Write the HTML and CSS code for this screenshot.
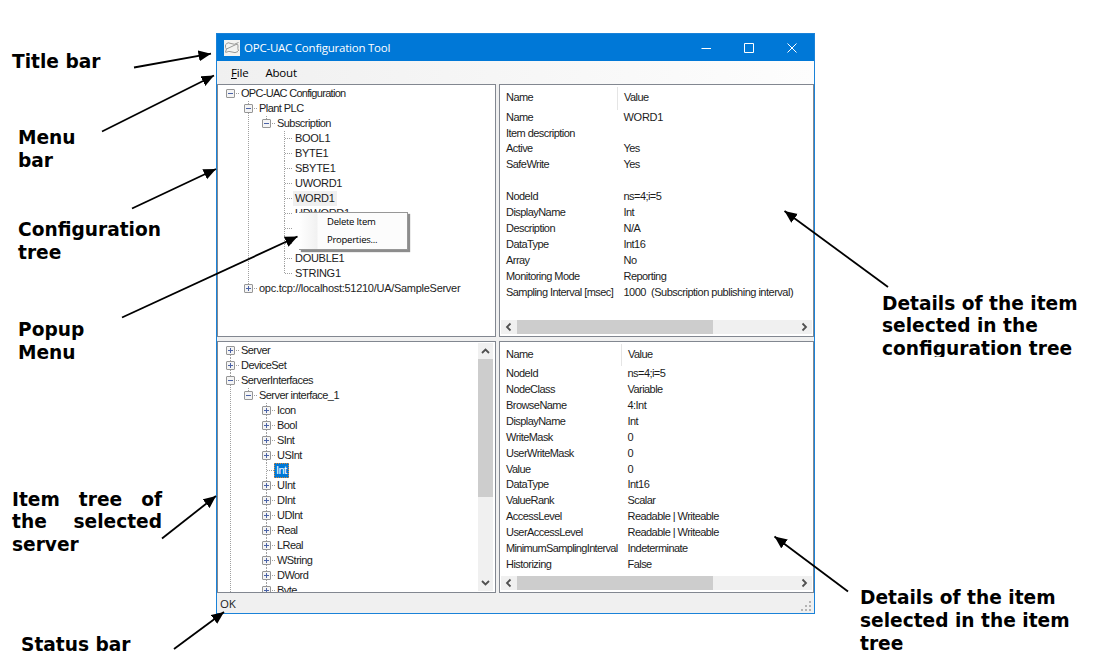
FILE: index.html
```html
<!DOCTYPE html>
<html lang="en">
<head>
    <meta charset="UTF-8">
    <title>OPC-UAC Configuration Tool</title>
    <link rel="stylesheet" href="styles.css">
</head>
<body>

<div class="page">
    <div class="notes">
        <p class="title-note">Title bar</p>
        <p class="menu-note">Menu<br>bar</p>
        <p class="config-note">Configuration<br>tree</p>
        <p class="popup-note">Popup<br>Menu</p>
        <p class="item-note">Item tree of the selected server</p>
        <p class="status-note">Status bar</p>
    </div>

    <div class="window">
        <div class="titlebar">
            <svg class="logo" width="16" height="16" viewBox="0 0 16 16">
                <rect width="16" height="16" fill="#f3f3f1"/>
                <path d="M1.500 4.500Q4 1.500 7 3.500T14.500 2.500M1.500 5Q1 8 2.500 9L12 4.500Q14.500 3.500 14 6T14.500 11M1.500 12.500Q5 10.500 8 12T14 11.500M2.500 9L1.500 12" fill="none" stroke="#9a9a98"/>
            </svg>
            <span class="caption">OPC-UAC Configuration Tool</span>
            <svg width="97" height="12" viewBox="0 0 97 12" fill="none" stroke="#fff">
                <path d="M.5 6.5H10M43.5 1.5H52.5V10.500H43.5ZM86.500 1.500L95.500 10.500M95.500 1.500L86.500 10.500"/>
            </svg>
        </div>
        <div class="menubar">
            <span><u>F</u>ile</span>
            <span>About</span>
        </div>

        <div class="panels">
            <div class="panel config-tree">
                <ul class="tree">
                    <li><div class="row"><i class="box minus"></i><span class="root">OPC-UAC Configuration</span></div>
                        <ul>
                            <li><div class="row"><i class="box minus"></i><span>Plant PLC</span></div>
                                <ul>
                                    <li><div class="row"><i class="box minus"></i><span>Subscription</span></div>
                                        <ul class="caps">
                                            <li><div class="row leaf"><span>BOOL1</span></div></li>
                                            <li><div class="row leaf"><span>BYTE1</span></div></li>
                                            <li><div class="row leaf"><span>SBYTE1</span></div></li>
                                            <li><div class="row leaf"><span>UWORD1</span></div></li>
                                            <li><div class="row leaf"><span class="current">WORD1</span></div></li>
                                            <li><div class="row leaf"><span>UDWORD1</span></div></li>
                                            <li><div class="row leaf"><span></span></div></li>
                                            <li><div class="row leaf"><span></span></div></li>
                                            <li><div class="row leaf"><span>DOUBLE1</span></div></li>
                                            <li><div class="row leaf"><span>STRING1</span></div></li>
                                        </ul>
                                    </li>
                                </ul>
                            </li>
                            <li><div class="row"><i class="box plus"></i><span class="caps">opc.tcp://localhost:51210/UA/SampleServer</span></div></li>
                        </ul>
                    </li>
                </ul>
                <div class="popup">
                    <div>Delete Item</div>
                    <div>Properties...</div>
                </div>
            </div>

            <div class="panel details">
                <table>
                    <tr><th>Name</th><th>Value</th></tr>
                    <tr><td>Name</td><td class="caps">WORD1</td></tr>
                    <tr><td>Item description</td><td></td></tr>
                    <tr><td>Active</td><td>Yes</td></tr>
                    <tr><td>SafeWrite</td><td>Yes</td></tr>
                    <tr><td></td><td></td></tr>
                    <tr><td>NodeId</td><td>ns=4;i=5</td></tr>
                    <tr><td>DisplayName</td><td>Int</td></tr>
                    <tr><td>Description</td><td>N/A</td></tr>
                    <tr><td>DataType</td><td>Int16</td></tr>
                    <tr><td>Array</td><td>No</td></tr>
                    <tr><td>Monitoring Mode</td><td>Reporting</td></tr>
                    <tr><td>Sampling Interval [msec]</td><td class="interval">1000&nbsp; (Subscription publishing interval)</td></tr>
                </table>
                <div class="hscroll">
                    <svg width="16" height="14" viewBox="0 0 16 14"><path d="M9.500 3.500L6 7L9.500 10.500"/></svg>
                    <div class="thumb"></div>
                    <svg width="16" height="14" viewBox="0 0 16 14"><path d="M6.500 3.500L10 7L6.500 10.500"/></svg>
                </div>
            </div>

            <div class="panel item-tree">
                <ul class="tree">
                    <li><div class="row"><i class="box plus"></i><span>Server</span></div></li>
                    <li><div class="row"><i class="box plus"></i><span>DeviceSet</span></div></li>
                    <li><div class="row"><i class="box minus"></i><span>ServerInterfaces</span></div>
                        <ul>
                            <li><div class="row"><i class="box minus"></i><span>Server interface_1</span></div>
                                <ul>
                                    <li><div class="row"><i class="box plus"></i><span>Icon</span></div></li>
                                    <li><div class="row"><i class="box plus"></i><span>Bool</span></div></li>
                                    <li><div class="row"><i class="box plus"></i><span>SInt</span></div></li>
                                    <li><div class="row"><i class="box plus"></i><span>USInt</span></div></li>
                                    <li><div class="row leaf"><span class="selected">Int</span></div></li>
                                    <li><div class="row"><i class="box plus"></i><span>UInt</span></div></li>
                                    <li><div class="row"><i class="box plus"></i><span>DInt</span></div></li>
                                    <li><div class="row"><i class="box plus"></i><span>UDInt</span></div></li>
                                    <li><div class="row"><i class="box plus"></i><span>Real</span></div></li>
                                    <li><div class="row"><i class="box plus"></i><span>LReal</span></div></li>
                                    <li><div class="row"><i class="box plus"></i><span>WString</span></div></li>
                                    <li><div class="row"><i class="box plus"></i><span>DWord</span></div></li>
                                    <li><div class="row"><i class="box plus"></i><span>Byte</span></div></li>
                                </ul>
                            </li>
                        </ul>
                    </li>
                    <li><div class="row"></div></li>
                </ul>
                <div class="vscroll">
                    <svg width="15" height="16" viewBox="0 0 15 16"><path d="M4 10L7.500 6.500L11 10"/></svg>
                    <div class="thumb"></div>
                    <svg width="15" height="16" viewBox="0 0 15 16"><path d="M4 6L7.500 9.500L11 6"/></svg>
                </div>
            </div>

            <div class="panel details wide">
                <table>
                    <tr><th>Name</th><th>Value</th></tr>
                    <tr><td>NodeId</td><td>ns=4;i=5</td></tr>
                    <tr><td>NodeClass</td><td>Variable</td></tr>
                    <tr><td>BrowseName</td><td>4:Int</td></tr>
                    <tr><td>DisplayName</td><td>Int</td></tr>
                    <tr><td>WriteMask</td><td>0</td></tr>
                    <tr><td>UserWriteMask</td><td>0</td></tr>
                    <tr><td>Value</td><td>0</td></tr>
                    <tr><td>DataType</td><td>Int16</td></tr>
                    <tr><td>ValueRank</td><td>Scalar</td></tr>
                    <tr><td>AccessLevel</td><td>Readable | Writeable</td></tr>
                    <tr><td>UserAccessLevel</td><td>Readable | Writeable</td></tr>
                    <tr><td class="long">MinimumSamplingInterval</td><td>Indeterminate</td></tr>
                    <tr><td>Historizing</td><td>False</td></tr>
                </table>
                <div class="hscroll">
                    <svg width="16" height="14" viewBox="0 0 16 14"><path d="M9.500 3.500L6 7L9.500 10.500"/></svg>
                    <div class="thumb"></div>
                    <svg width="16" height="14" viewBox="0 0 16 14"><path d="M6.500 3.500L10 7L6.500 10.500"/></svg>
                </div>
            </div>
        </div>

        <div class="statusbar">
            <span>OK</span>
            <svg width="10" height="10" viewBox="0 0 10 10" fill="#b4b4b4">
                <path d="M8 0h2v2h-2zM4 4h2v2h-2zM8 4h2v2h-2zM0 8h2v2h-2zM4 8h2v2h-2zM8 8h2v2h-2z"/>
            </svg>
        </div>
    </div>

    <div class="notes right">
        <p class="config-details-note">Details of the item<br>selected in the<br>configuration tree</p>
        <p class="item-details-note">Details of the item<br>selected in the item<br>tree</p>
    </div>

    <svg class="arrows" width="1097" height="672" viewBox="0 0 1097 672">
        <defs>
            <marker id="head" markerUnits="userSpaceOnUse" markerWidth="13" markerHeight="12" refX="12.500" refY="6" orient="auto">
                <path d="M0 .5L12.500 6L0 11.500Z"/>
            </marker>
        </defs>
        <g stroke="#000" stroke-width="1.800">
            <path d="M134 67.500L211 53.700" marker-end="url(#head)"/>
            <path d="M102 131.500L214 75.500" marker-end="url(#head)"/>
            <path d="M132 208.500L216 169" marker-end="url(#head)"/>
            <path d="M122 317.500L297.500 236.500" marker-end="url(#head)"/>
            <path d="M162 538.500L216 496" marker-end="url(#head)"/>
            <path d="M174 649L224 612" marker-end="url(#head)"/>
            <path d="M888 287L784.500 211" marker-end="url(#head)"/>
            <path d="M848 591.500L774.500 536.500" marker-end="url(#head)"/>
        </g>
    </svg>
</div>

</body>
</html>
```
FILE: styles.css
```css
body {
    margin: 0;
    background: #fff;
    font-family: "Liberation Sans", Arial, sans-serif;
    font-size: 11px;
    color: #1c1c1c;
}

.page {
    position: relative;
    display: grid;
    grid-template-columns: 216px 599px 282px;
    height: 672px;
    overflow: hidden;
}

/* Callout texts */
.notes {
    font: bold 18.6px/22.8px "DejaVu Sans", Verdana, sans-serif;
    color: #000;
    white-space: nowrap;
}

.notes p {
    margin: 0 0 0 18px;
}

.notes .title-note {
    margin: 51px 0 0 12px;
}

.notes .menu-note {
    margin-top: 53px;
}

.notes .config-note {
    margin-top: 47px;
}

.notes .popup-note {
    margin-top: 54.500px;
}

.notes .item-note {
    width: 150px;
    margin: 123.500px 0 0 12px;
    text-align: justify;
    white-space: normal;
}

.notes .status-note {
    margin: 77px 0 0 21px;
}

.notes .config-details-note {
    height: 64px;
    margin: 292.500px 0 0 67px;
    overflow: hidden;
}

.notes .item-details-note {
    margin: 230.500px 0 0 45px;
}

.arrows {
    position: absolute;
    top: 0;
    left: 0;
}

/* Window */
.window {
    display: flex;
    flex-direction: column;
    box-sizing: border-box;
    height: 581px;
    margin-top: 33px;
    border: 1px solid #1a82d8;
    background: #f0f0f0;
}

.titlebar {
    display: flex;
    align-items: center;
    height: 27px;
    padding: 0 16px 0 7px;
    background: #0078d7;
    color: #fff;
}

.caption {
    flex: 1;
    margin-left: 4px;
    font: 11.5px "Open Sans", sans-serif;
    letter-spacing: -0.23px;
}

.menubar {
    display: flex;
    gap: 17px;
    height: 23px;
    padding-left: 14px;
    background: linear-gradient(to right, #f0f0f0, #fdfdfd);
    font: 11.5px/23px "Open Sans", sans-serif;
    letter-spacing: -0.2px;
    color: #000;
}

.panels {
    display: grid;
    grid-template-columns: 279px 315px;
    grid-template-rows: 253px 252px;
    gap: 4px 3px;
}

.panel {
    display: flex;
    box-sizing: border-box;
    border: 1px solid #828790;
    background: #fff;
    overflow: hidden;
    letter-spacing: -0.55px;
    white-space: nowrap;
}

.config-tree {
    position: relative;
}

/* Trees */
.tree {
    flex: 1;
    padding: 1px 0 0 8px;
}

ul {
    margin: 0;
    padding: 0 0 0 18px;
    list-style: none;
}

li {
    background: repeating-linear-gradient(#a0a0a0 0 1px, #fff 1px 2px) 4px 0 / 1px 100% no-repeat;
}

li:last-child {
    background-size: 1px 7px;
}

.tree > li:first-child {
    background-position: 4px 8px;
}

.config-tree .tree > li {
    background: none;
}

.row {
    display: flex;
    align-items: center;
    height: 15px;
    line-height: 15px;
}

.row::before {
    content: "";
    order: 1;
    width: 5px;
    height: 1px;
    background: repeating-linear-gradient(to right, #fff 0 1px, #a0a0a0 1px 2px);
}

.row.leaf::before {
    order: 0;
    width: 8px;
    margin-left: 4px;
}

.row span {
    order: 2;
    padding: 0 1px;
}

.row.leaf span {
    margin-left: 1px;
    padding: 0 2px;
}

.caps {
    letter-spacing: -0.28px;
}

.root {
    letter-spacing: -0.7px;
}

.row .current {
    background: #f0f0f0;
}

.row.leaf .selected {
    height: 13px;
    margin-left: 0;
    padding: 0 1px;
    border: 1px dotted #e0862e;
    background: #0078d7;
    line-height: 13px;
    color: #fff;
}

.box {
    box-sizing: border-box;
    width: 9px;
    height: 9px;
    border: 1px solid #969696;
    border-radius: 1px;
    background: linear-gradient(#4b63a7, #4b63a7) center / 5px 1px no-repeat, #f4f4f4;
}

.box.plus {
    background: linear-gradient(#4b63a7, #4b63a7) center / 5px 1px no-repeat,
        linear-gradient(#4b63a7, #4b63a7) center / 1px 5px no-repeat, #f4f4f4;
}

/* Context menu */
.popup {
    position: absolute;
    top: 127px;
    left: 81px;
    box-sizing: border-box;
    width: 109px;
    height: 38px;
    padding: 0 0 0 28px;
    border: 1px solid #979797;
    border-left: 0;
    background: linear-gradient(to right, #fff, #f1f1f1 18px, #fcfcfc 19px);
    box-shadow: 2px 2px 1px #8c8c8c, -4px 1px 0 #fff;
    font: 9.5px/18px "Open Sans", sans-serif;
    letter-spacing: -0.25px;
    color: #000;
}

/* Details lists */
.details {
    flex-direction: column;
    justify-content: space-between;
}

table {
    border-collapse: collapse;
    table-layout: fixed;
    width: 313px;
    margin-top: 2px;
}

th, td {
    height: 15.92px;
    padding: 0 0 0 6px;
    line-height: 15.92px;
    font-weight: normal;
    text-align: left;
}

th {
    height: 22.6px;
}

.wide th {
    height: 22px;
}

th:first-child {
    width: 111px;
    border-right: 1px solid #e5e5e5;
}

.wide th:first-child {
    width: 115px;
}

.long {
    letter-spacing: -0.65px;
}

.interval {
    letter-spacing: -0.5px;
}

/* Scrollbars */
.hscroll, .vscroll {
    display: flex;
    background: #f0f0f0;
}

.hscroll {
    justify-content: space-between;
    height: 14px;
    margin: 0 1px 2px;
}

.hscroll .thumb {
    width: 196px;
    margin-right: auto;
}

.vscroll {
    flex-direction: column;
    width: 15px;
    margin: 1px 2px 1px 0;
}

.vscroll .thumb {
    height: 138px;
    margin-bottom: auto;
}

.thumb {
    background: #cdcdcd;
}

.hscroll path, .vscroll path {
    fill: none;
    stroke: #505050;
    stroke-width: 1.8;
}

.statusbar {
    display: flex;
    flex: 1;
    justify-content: space-between;
    align-items: center;
    padding: 0 3px 0 3px;
    font: 11.5px "Open Sans", sans-serif;
    letter-spacing: -0.3px;
}

.statusbar svg {
    margin-top: 5px;
}
```
